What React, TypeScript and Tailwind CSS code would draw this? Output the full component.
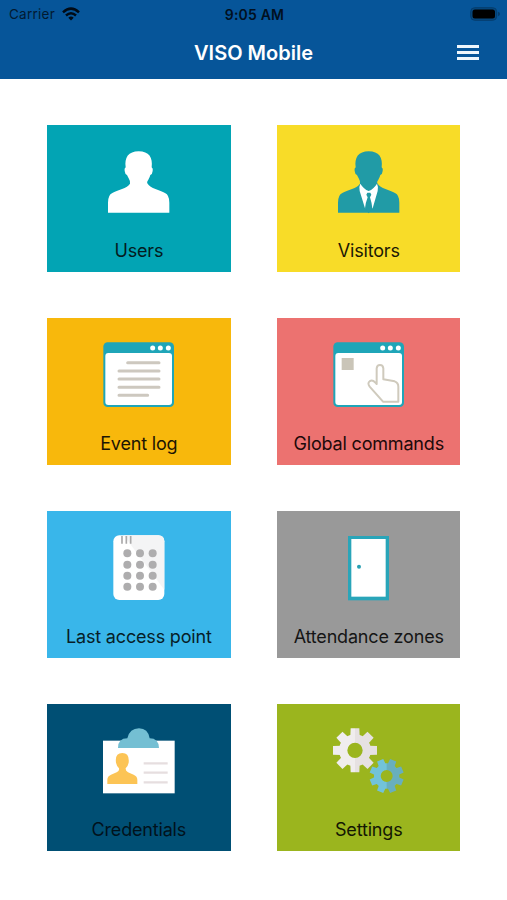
import type { ReactNode } from "react";

const BUST =
  "M205 277 L205 247 Q205 224 218 218 C232 210 264 203 271 190 Q273 184 267 174 Q264 168 262 164 Q256 162 255 152 Q253 144 258 141 C254 112 266 93 297 93 C328 93 340 112 336 141 Q341 144 339 152 Q338 162 332 164 Q330 172 326 178 Q320 186 324 190 C331 203 362 210 376 218 Q389 224 389 247 L389 277 Z";

const TEETH = [0, 45, 90, 135, 180, 225, 270, 315];

function Icon({ top = 90, children }: { top?: number; children: ReactNode }) {
  return (
    <svg className="h-[65px] w-[71px]" viewBox={`190 ${top} 213 195`} overflow="visible" aria-hidden="true">
      {children}
    </svg>
  );
}

function UsersIcon() {
  return (
    <Icon top={86}>
      <path d={BUST} fill="#fff" />
    </Icon>
  );
}

function VisitorsIcon() {
  return (
    <Icon top={86}>
      <path d={BUST} fill="#219ba6" />
      <path d="M272 190 Q282 206 297 212 Q312 206 322 190 Q327 200 324 212 L309 264 H286 L270 212 Q267 200 272 190 Z" fill="#fff" />
      <path d="M293 217 H302 L305 223 L301 231 Q306 246 308 264 L297 279 L286 264 Q288 246 294 231 L290 223 Z" fill="#219ba6" />
    </Icon>
  );
}

function WindowFrame() {
  return (
    <>
      <rect x="191" y="91" width="212" height="194" rx="13" fill="#1fa5b8" />
      <rect x="197" y="123" width="200" height="156" rx="9" fill="#fff" />
      <circle cx="339" cy="108" r="7.5" fill="#fff" />
      <circle cx="362" cy="108" r="7.5" fill="#fff" />
      <circle cx="386" cy="108" r="7.5" fill="#fff" />
    </>
  );
}

function EventLogIcon() {
  return (
    <Icon>
      <WindowFrame />
      <path
        d="M264 152 H358 M238 177 H358 M238 201 H358 M238 226 H358 M238 250 H324"
        stroke="#cdc8bf"
        strokeWidth="9"
        strokeLinecap="round"
      />
    </Icon>
  );
}

function CommandsIcon() {
  return (
    <Icon>
      <WindowFrame />
      <rect x="216" y="138" width="36" height="36" fill="#cac5b8" />
      <path
        d="M340 269 L300 224 Q292 213 301 207 Q309 203 317 212 L321 216 V169 Q322 159 331 159 Q340 159 341 169 V202 L375 208 Q386 212 386 224 V269 Z"
        fill="#fff"
        stroke="#cfcabd"
        strokeWidth="6"
        strokeLinejoin="round"
      />
    </Icon>
  );
}

function KeypadIcon() {
  return (
    <Icon>
      <rect x="221" y="91" width="153" height="194" rx="18" fill="#fff" />
      <path d="M252 91 H356 Q374 91 374 109 V254 Z" fill="#f4f4f5" />
      <path d="M247 93 V116 M260 93 V116 M273 93 V116" stroke="#aaa9aa" strokeWidth="5" />
      {[145, 179, 212, 245].map((y) =>
        [263, 301, 339].map((x) => <circle key={`${x}-${y}`} cx={x} cy={y} r="12" fill="#aeadae" />),
      )}
    </Icon>
  );
}

function DoorIcon() {
  return (
    <Icon>
      <rect x="235" y="93" width="123" height="193" fill="#29a5b9" />
      <rect x="245" y="102" width="103" height="173" fill="#fff" />
      <circle cx="268" cy="185" r="6" fill="#29a0b3" />
    </Icon>
  );
}

function BadgeIcon() {
  return (
    <Icon>
      <rect x="190" y="128" width="215" height="158" fill="#fff" />
      <path d="M235 150 Q235 121 263 121 Q270 91 298 91 Q325 91 330 121 Q357 121 358 150 Z" fill="#74bfd3" />
      <path
        d="M203 258 V245 Q203 235 214 230 L231 223 Q240 218 238 211 Q231 204 229 194 Q225 165 248 165 Q270 165 267 194 Q265 204 258 211 Q257 218 265 223 L282 230 Q293 235 293 245 V258 Z"
        fill="#fcc455"
      />
      <path d="M312 196 H384 M312 224 H384 M312 253 H384" stroke="#e6dedf" strokeWidth="7" />
    </Icon>
  );
}

type GearProps = {
  cx: number;
  cy: number;
  outer: number;
  body: number;
  hole: number;
  tooth: number;
  turn: number;
  left: string;
  right: string;
};

function Gear({ cx, cy, outer, body, hole, tooth, turn, left, right }: GearProps) {
  const id = `gear-${cx}`;
  const ring = (body + hole) / 2;
  return (
    <g>
      <mask id={id} maskUnits="userSpaceOnUse" x={cx - 80} y={cy - 80} width="160" height="160">
        <circle cx={cx} cy={cy} r={ring} fill="none" stroke="#fff" strokeWidth={body - hole} />
        {TEETH.map((a) => (
          <path
            key={a}
            d={`M${cx - tooth - 1} ${cy - body + 6} L${cx - tooth} ${cy - outer} H${cx + tooth} L${cx + tooth + 1} ${cy - body + 6} Z`}
            fill="#fff"
            transform={`rotate(${a + turn} ${cx} ${cy})`}
          />
        ))}
      </mask>
      <g mask={`url(#${id})`}>
        <rect x={cx - 80} y={cy - 80} width="81" height="160" fill={left} />
        <rect x={cx} y={cy - 80} width="80" height="160" fill={right} />
      </g>
    </g>
  );
}

function SettingsIcon() {
  return (
    <Icon>
      <Gear cx={256} cy={157} outer={66} body={48} hole={23} tooth={13} turn={0} left="#f0edee" right="#e6e1e2" />
      <Gear cx={351} cy={234} outer={51} body={38} hole={18} tooth={10} turn={22.5} left="#72c3d9" right="#68afbd" />
    </Icon>
  );
}

const TILES = [
  { label: "Users", color: "bg-[#02a4b4]", text: "text-[#041b20]", icon: <UsersIcon /> },
  { label: "Visitors", color: "bg-[#f8dc28]", text: "text-[#1c1905]", icon: <VisitorsIcon /> },
  { label: "Event log", color: "bg-[#f8b80c]", text: "text-[#1c1503]", icon: <EventLogIcon /> },
  { label: "Global commands", color: "bg-[#ec7270]", text: "text-[#200909]", icon: <CommandsIcon /> },
  { label: "Last access point", color: "bg-[#39b6ea]", text: "text-[#071e28]", icon: <KeypadIcon /> },
  { label: "Attendance zones", color: "bg-[#999999]", text: "text-[#151515]", icon: <DoorIcon /> },
  { label: "Credentials", color: "bg-[#004f74]", text: "text-[#00121c]", icon: <BadgeIcon /> },
  { label: "Settings", color: "bg-[#9bb51e]", text: "text-[#131703]", icon: <SettingsIcon /> },
];

function StatusBar() {
  return (
    <div className="grid h-[27px] grid-cols-3 items-center pl-[9px] pr-[7px] text-[13.5px] leading-none text-[#021a31]">
      <div className="flex items-center gap-[7px]">
        <span className="pt-[2px] tracking-[0.25px]">Carrier</span>
        <svg className="h-[14px] w-[18px]" viewBox="0 0 18 14" fill="none" stroke="#010b16" strokeWidth="2.5" aria-hidden="true">
          <path d="M1 5.3 Q9 -2 17 5.3" />
          <path d="M4 8.5 Q9 4 14 8.5" />
          <path d="M6.3 10.7 Q9 8.4 11.7 10.7 L9 13.4 Z" fill="#010b16" stroke="none" />
        </svg>
      </div>
      <span className="pt-[2px] text-center text-[14px] font-semibold tracking-[0.2px] text-[#01101f]">9:05 AM</span>
      <svg className="h-[14px] w-[30px] justify-self-end" viewBox="0 0 30 14" aria-hidden="true">
        <rect x="0.7" y="0.7" width="26" height="12.6" rx="4" fill="#06487f" stroke="#053d6d" />
        <rect x="2.5" y="2.5" width="22.5" height="9" rx="2.5" fill="#000" />
        <path d="M28 4.8 Q30 5.4 30 7 Q30 8.6 28 9.2 Z" fill="#053d6d" />
      </svg>
    </div>
  );
}

export default function App() {
  return (
    <div className="h-[900px] w-[507px] overflow-hidden bg-white font-['Inter','Liberation_Sans',sans-serif]">
      <header className="h-[79px] bg-[#065599]">
        <StatusBar />
        <div className="grid h-[50px] grid-cols-[1fr_auto_1fr] items-center pr-[28px]">
          <h1 className="col-start-2 translate-x-[14px] pt-[2px] text-[20px] font-semibold leading-none text-white">VISO Mobile</h1>
          <button className="flex w-[22px] flex-col gap-[3px] justify-self-end" aria-label="Menu">
            <span className="h-[3px] w-full bg-[#eef6fc]" />
            <span className="h-[3px] w-full bg-[#eef6fc]" />
            <span className="h-[3px] w-full bg-[#eef6fc]" />
          </button>
        </div>
      </header>
      <main className="grid grid-cols-[183.5px_183.5px] gap-x-[46.4px] gap-y-[46.5px] pl-[47.1px] pt-[46.4px]">
        {TILES.map((tile) => (
          <section key={tile.label} className={`flex h-[146.5px] flex-col items-center pt-[23.5px] ${tile.color}`}>
            {tile.icon}
            <span className={`mt-[25px] whitespace-nowrap text-[18px] leading-[24px] tracking-[-0.18px] ${tile.text}`}>
              {tile.label}
            </span>
          </section>
        ))}
      </main>
    </div>
  );
}
